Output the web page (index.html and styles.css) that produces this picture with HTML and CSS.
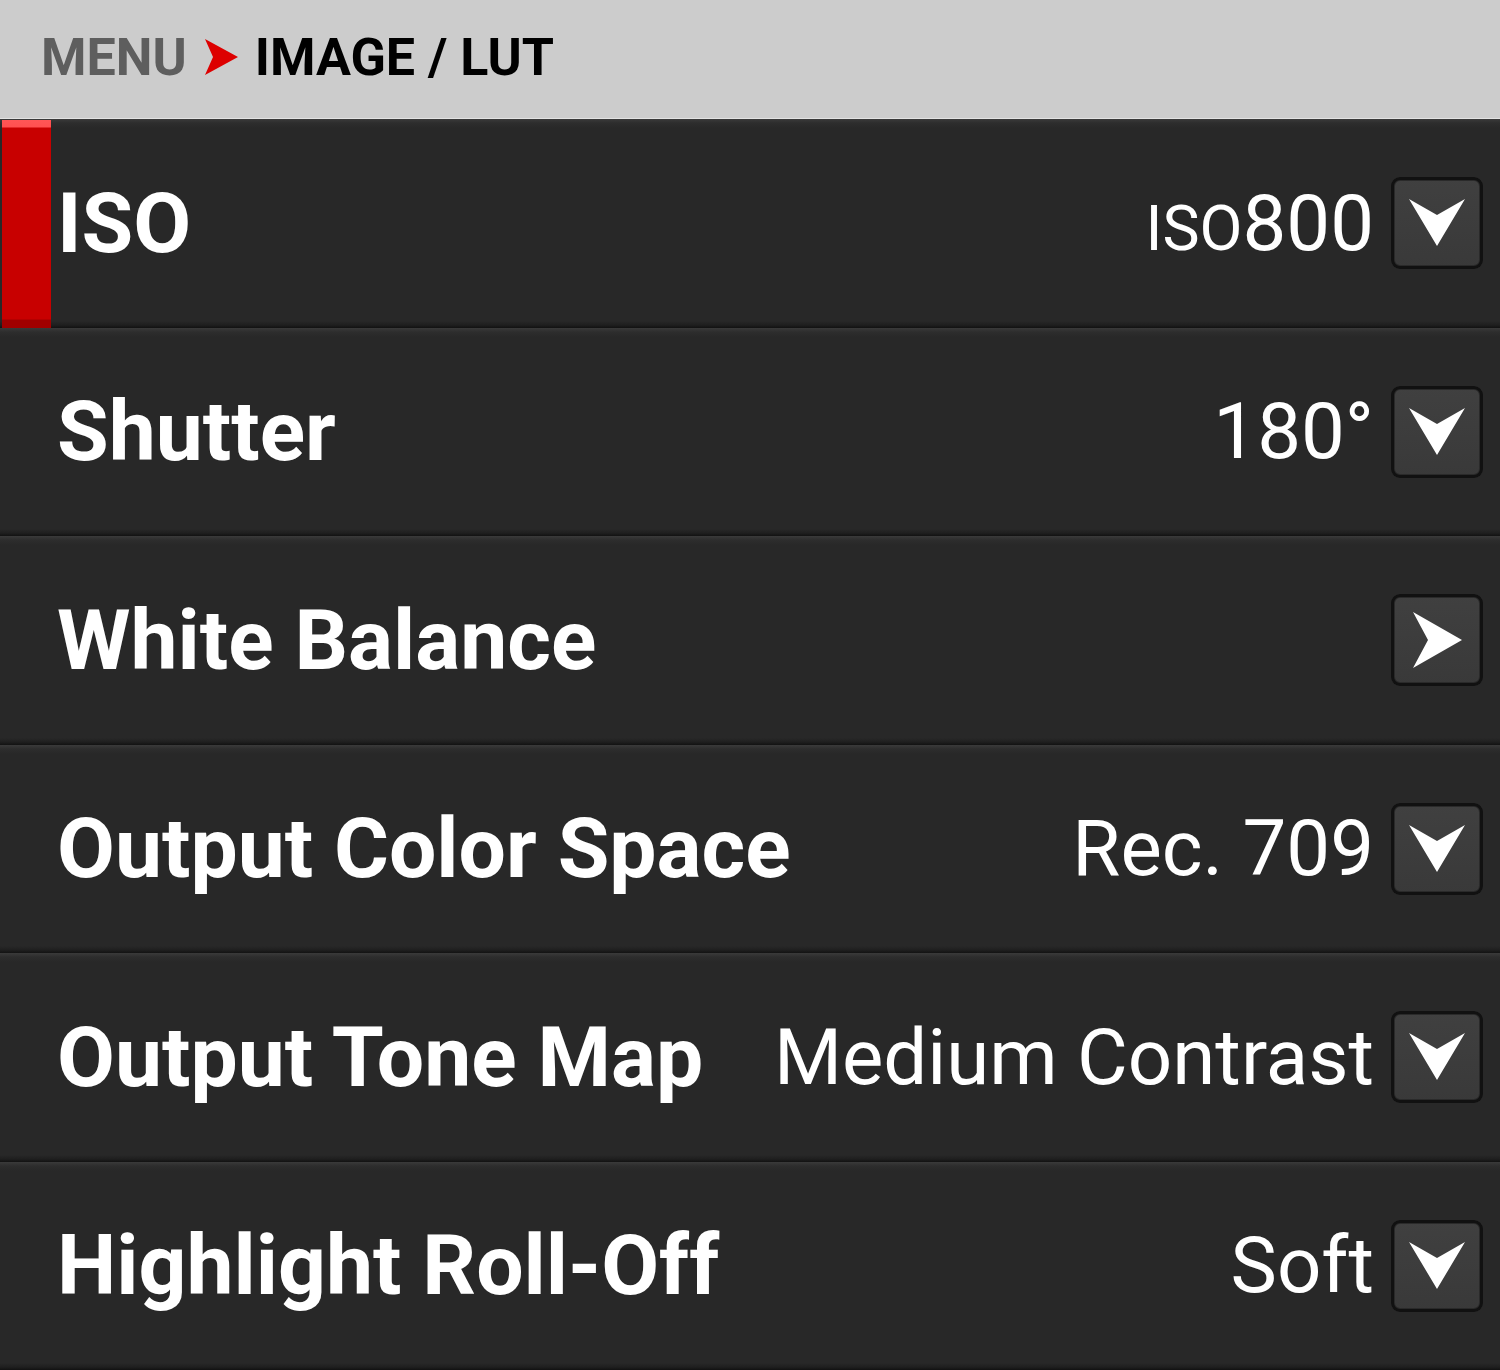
FILE: index.html
```html
<!DOCTYPE html>
<html>
<head>
<meta charset="utf-8">
<link rel="stylesheet" href="styles.css">
</head>
<body>
<div class="screen">
  <header class="crumbs">
    <span class="crumb-root">MENU</span>
    <svg class="crumb-sep" width="33" height="36" viewBox="0 0 33 36"><polygon points="0,0 33,18 0,36 8,18" fill="#dd0000"/></svg>
    <span class="crumb-current">IMAGE / LUT</span>
  </header>
  <div class="list">
    <div class="row is-selected">
      <span class="marker"></span>
      <span class="label">ISO</span>
      <span class="value"><span class="small">ISO</span>800</span>
      <span class="btn"><svg viewBox="0 0 92 92" width="92" height="92"><polygon points="18,22 46,38 74,22 46,69" fill="#fff"/></svg></span>
    </div>
    <div class="row">
      <span class="label">Shutter</span>
      <span class="value">180°</span>
      <span class="btn"><svg viewBox="0 0 92 92" width="92" height="92"><polygon points="18,22 46,38 74,22 46,69" fill="#fff"/></svg></span>
    </div>
    <div class="row">
      <span class="label">White Balance</span>
      <span class="value"></span>
      <span class="btn"><svg viewBox="0 0 92 92" width="92" height="92"><polygon points="22,18 71,46 22,74 37,46" fill="#fff"/></svg></span>
    </div>
    <div class="row">
      <span class="label">Output Color Space</span>
      <span class="value">Rec. 709</span>
      <span class="btn"><svg viewBox="0 0 92 92" width="92" height="92"><polygon points="18,22 46,38 74,22 46,69" fill="#fff"/></svg></span>
    </div>
    <div class="row">
      <span class="label">Output Tone Map</span>
      <span class="value">Medium Contrast</span>
      <span class="btn"><svg viewBox="0 0 92 92" width="92" height="92"><polygon points="18,22 46,38 74,22 46,69" fill="#fff"/></svg></span>
    </div>
    <div class="row">
      <span class="label">Highlight Roll-Off</span>
      <span class="value">Soft</span>
      <span class="btn"><svg viewBox="0 0 92 92" width="92" height="92"><polygon points="18,22 46,38 74,22 46,69" fill="#fff"/></svg></span>
    </div>
  </div>
</div>
</body>
</html>
```

FILE: styles.css
```css
html, body {
  margin: 0;
  padding: 0;
  background: #282828;
}
.screen {
  width: 1500px;
  height: 1370px;
  display: flex;
  flex-direction: column;
  font-family: Roboto, "Liberation Sans", sans-serif;
}
.crumbs {
  height: 119px;
  box-sizing: border-box;
  border-bottom: 1px solid #e2e2e2;
  background: #cccccc;
  display: flex;
  align-items: center;
  padding-left: 41px;
  padding-bottom: 4px;
  font-weight: 700;
  font-size: 52px;
}
.crumb-root {
  color: #5e5e5e;
}
.crumb-sep {
  margin: 0 17px 0 18px;
}
.crumb-current {
  color: #000;
}
.list {
  flex: 1;
  display: grid;
  grid-template-rows: repeat(6, 1fr);
}
.row {
  position: relative;
  display: flex;
  align-items: center;
  padding: 0 17px 0 57px;
  color: #fff;
  background: linear-gradient(to bottom, #3a3a3a 0, #2d2d2d 4px, #282828 9px, #282828 calc(100% - 7px), #1f1f1f calc(100% - 3px), #121212 100%);
}
.marker {
  position: absolute;
  left: 2px;
  top: 1px;
  bottom: 0;
  width: 49px;
  background: linear-gradient(to bottom, #ff5555 0, #ff5050 7px, #c80000 8px, #c80000 calc(100% - 9px), #a00000 calc(100% - 8px), #a00000 100%);
}
.label {
  flex: 1;
  font-weight: 700;
  font-size: 84px;
  white-space: nowrap;
}
.value {
  font-weight: 400;
  font-size: 78px;
  margin-right: 17px;
  white-space: nowrap;
}
.small {
  font-size: 0.8em;
}
.btn {
  width: 92px;
  height: 92px;
  border-radius: 9px;
  background: linear-gradient(to bottom, #404040, #393939);
  box-shadow: inset 0 0 0 3px #111, inset 0 0 0 4px #2a2a2a;
  display: block;
  flex: none;
}
.btn svg {
  display: block;
}
```
